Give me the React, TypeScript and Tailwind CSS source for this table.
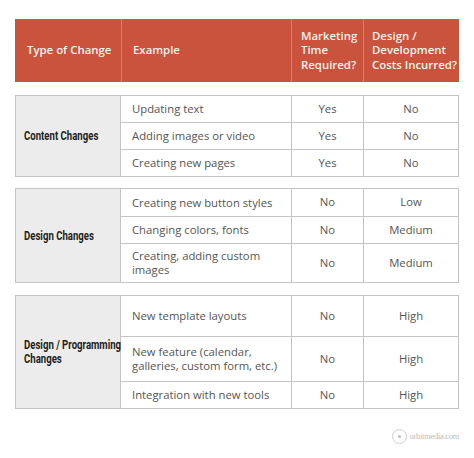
import React from "react";

type Row = { ex: React.ReactNode; t: string; c: string; h: string };

const body = "font-['Open_Sans',sans-serif] text-[11.3px] text-[#555555]";

function Group({ label, rows, mt }: { label: React.ReactNode; rows: Row[]; mt: string }) {
  return (
    <div className={`${mt} flex w-[444px] border border-[#c4c4c4]`}>
      <div className="w-[105px] shrink-0 bg-[#ececec] border-r border-[#c4c4c4] flex items-center pl-[8px] font-['Roboto',sans-serif] font-bold text-[12px] leading-[14px] text-[#222222]">
        <span className="inline-block whitespace-nowrap origin-left scale-x-80">{label}</span>
      </div>
      <div className="flex-1 flex flex-col">
        {rows.map((r, i) => (
          <div
            key={i}
            className={`${r.h} grid grid-cols-[170px_72px_1fr] ${i > 0 ? "border-t border-[#c4c4c4]" : ""} ${body}`}
          >
            <div className="flex items-center pl-[11px] leading-[14px]">{r.ex}</div>
            <div className="flex items-center justify-center border-l border-[#c4c4c4]">{r.t}</div>
            <div className="flex items-center justify-center border-l border-[#c4c4c4]">{r.c}</div>
          </div>
        ))}
      </div>
    </div>
  );
}

export default function App() {
  return (
    <div className="w-[474px] h-[458px] bg-white relative overflow-hidden">
      <div className="pl-[15px] pt-[19px]">
        <div className="w-[444px] h-[63px] bg-[#c9533c] grid grid-cols-[106px_170px_72px_1fr] font-['Open_Sans',sans-serif] font-semibold text-[11.4px] leading-[14.5px] text-[#fdf1ec]">
          <div className="flex items-center pl-[12px]">Type of Change</div>
          <div className="flex items-center pl-[11px] border-l border-[#d8806d]">Example</div>
          <div className="flex items-center pl-[9px] border-l border-[#d8806d]">
            <div>
              Marketing
              <br />
              Time
              <br />
              Required?
            </div>
          </div>
          <div className="flex items-center pl-[8px] border-l border-[#d8806d]">
            <div>
              Design /
              <br />
              Development
              <br />
              Costs Incurred?
            </div>
          </div>
        </div>

        <Group
          mt="mt-[13px]"
          label="Content Changes"
          rows={[
            { ex: "Updating text", t: "Yes", c: "No", h: "h-[26px]" },
            { ex: "Adding images or video", t: "Yes", c: "No", h: "h-[27px]" },
            { ex: "Creating new pages", t: "Yes", c: "No", h: "h-[27px]" },
          ]}
        />

        <Group
          mt="mt-[11px]"
          label="Design Changes"
          rows={[
            { ex: "Creating new button styles", t: "No", c: "Low", h: "h-[27px]" },
            { ex: "Changing colors, fonts", t: "No", c: "Medium", h: "h-[27px]" },
            {
              ex: (
                <span>
                  Creating, adding custom
                  <br />
                  images
                </span>
              ),
              t: "No",
              c: "Medium",
              h: "h-[39px]",
            },
          ]}
        />

        <Group
          mt="mt-[12px]"
          label={
            <>
              Design / Programming
              <br />
              Changes
            </>
          }
          rows={[
            { ex: "New template layouts", t: "No", c: "High", h: "h-[40px]" },
            {
              ex: (
                <span>
                  New feature (calendar,
                  <br />
                  galleries, custom form, etc.)
                </span>
              ),
              t: "No",
              c: "High",
              h: "h-[45px]",
            },
            { ex: "Integration with new tools", t: "No", c: "High", h: "h-[27px]" },
          ]}
        />

        <div className="mt-[20px] w-[444px] flex justify-end items-center gap-[3px]">
          <div className="w-[15px] h-[15px] rounded-full border border-[#cfcfcf] flex items-center justify-center">
            <div className="w-[3px] h-[3px] rounded-full bg-[#bdbdbd]" />
          </div>
          <span className="font-['Liberation_Serif',serif] text-[8.5px] tracking-[-0.3px] text-[#bcbcbc]">
            orbitmedia.com
          </span>
        </div>
      </div>
    </div>
  );
}
